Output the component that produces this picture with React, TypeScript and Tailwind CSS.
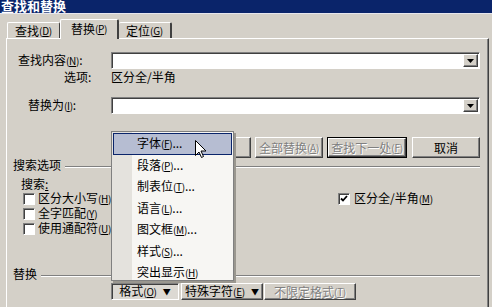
import React from "react";

const raised =
  "border border-t-white border-l-white border-b-[#404040] border-r-[#404040] shadow-[inset_-1px_-1px_0_#808080]";
const sunken =
  "border border-t-[#808080] border-l-[#808080] border-b-white border-r-white shadow-[inset_1px_1px_0_#404040]";
const disabledText = "text-[#808080] [text-shadow:1px_1px_0_#ffffff]";

function Acc({ c }: { c: string }) {
  return (
    <span className="text-[10px] tracking-[-0.3px]">
      (<u>{c}</u>)
    </span>
  );
}

function ComboBox() {
  return (
    <div className={`flex-1 h-[17px] bg-white flex items-center justify-end pr-[1px] ${sunken}`}>
      <div className={`w-[15px] h-[13px] bg-[#d4d0c8] flex items-center justify-center ${raised}`}>
        <svg width="7" height="4" viewBox="0 0 7 4">
          <path d="M0 0h7L3.5 4z" fill="#000" />
        </svg>
      </div>
    </div>
  );
}

function CheckBox({ checked }: { checked?: boolean }) {
  return (
    <div className={`w-[12px] h-[12px] shrink-0 bg-white flex items-center justify-center ${sunken}`}>
      {checked && (
        <svg width="8" height="8" viewBox="0 0 8 8">
          <path d="M1 3.5l2 2 4-4.5" stroke="#000" strokeWidth="1.8" fill="none" />
        </svg>
      )}
    </div>
  );
}

function MenuItem({ label, acc, dots, active }: { label: string; acc: string; dots?: boolean; active?: boolean }) {
  return (
    <div
      className={`h-[21.5px] flex items-center ${
        active ? "bg-[#b6bdd2] border border-[#0a246a] pl-[23px]" : "border border-transparent pl-[23px]"
      }`}
    >
      <span>
        {label}
        <Acc c={acc} />
        {dots ? "..." : ""}
      </span>
    </div>
  );
}

export default function App() {
  return (
    <div
      className="relative w-[492px] h-[307px] overflow-hidden bg-[#d4d0c8] text-[12px] leading-[14px] text-black"
      style={{ fontFamily: '"Noto Sans CJK SC", "Noto Sans", sans-serif' }}
    >
      {/* title bar */}
      <div className="h-[13px] bg-[#0a246a] text-white font-bold text-[13px] leading-[12px] pl-[1px] overflow-hidden">
        查找和替换
      </div>
      <div className="h-[1px] bg-[#e6e6ee]" />

      {/* tabs */}
      <div className="mt-[5px] h-[19px] pl-[7px] flex items-end">
        <div className="w-[53px] h-[16px] border-t border-l border-t-white border-l-white border-r border-r-[#404040] rounded-t-[2px] flex items-center justify-center">
          查找<Acc c="D" />
        </div>
        <div className="w-[59px] h-[20px] -mb-[1px] bg-[#d4d0c8] border-t border-l border-t-white border-l-white border-r-2 border-r-[#404040] rounded-t-[2px] flex items-center justify-center relative z-10 pb-[2px]">
          替换<Acc c="P" />
        </div>
        <div className="w-[53px] h-[16px] border-t border-t-white border-r-2 border-r-[#404040] rounded-t-[2px] flex items-center justify-center">
          定位<Acc c="G" />
        </div>
      </div>

      {/* panel */}
      <div className="ml-[6px] mr-[3px] h-[300px] border-t border-l border-t-white border-l-white border-r border-r-[#404040] shadow-[inset_-1px_0_0_#808080] pl-[1px] pr-[8px] flex flex-col">
        {/* Find row */}
        <div className="mt-[13px] flex items-center h-[17px]">
          <div className="w-[103px] pl-[10px]">
            查找内容<Acc c="N" />:
          </div>
          <ComboBox />
        </div>
        <div className="mt-[1px] h-[14px] flex items-center">
          <div className="w-[103px] pl-[56px]">选项:</div>
          <div>区分全/半角</div>
        </div>
        {/* Replace row */}
        <div className="mt-[13px] flex items-center h-[17px]">
          <div className="w-[103px] pl-[20px]">
            替换为<Acc c="I" />:
          </div>
          <ComboBox />
        </div>

        {/* buttons row */}
        <div className="mt-[23px] h-[21px] flex justify-end gap-[4px]">
          <div className={`w-[68px] h-[21px] flex items-center justify-center ${raised}`}>
            替换<Acc c="R" />
          </div>
          <div className={`w-[68px] h-[21px] flex items-center justify-center ${raised} ${disabledText}`}>
            全部替换<Acc c="A" />
          </div>
          <div className="w-[80px] h-[21px] border border-black">
            <div className={`w-full h-full flex items-center justify-center ${raised} ${disabledText}`}>
              查找下一处<Acc c="F" />
            </div>
          </div>
          <div className={`ml-[1px] w-[68px] h-[21px] flex items-center justify-center ${raised}`}>取消</div>
        </div>

        {/* search options group */}
        <div className="h-[14px] flex items-center pl-[5px]">
          <span>搜索选项</span>
          <div className="flex-1 ml-[4px] mt-[3px] h-[2px] border-t border-t-[#808080] border-b border-b-white" />
        </div>
        <div className="mt-[5px] h-[14px] flex items-center pl-[13px]">
          搜索<u>:</u>
        </div>
        <div className="h-[15px] flex items-center pl-[15px]">
          <div className="w-[315px] flex items-center gap-[3px]">
            <CheckBox />
            <span>
              区分大小写<Acc c="H" />
            </span>
          </div>
          <div className="flex items-center gap-[4px]">
            <CheckBox checked />
            <span>
              区分全/半角<Acc c="M" />
            </span>
          </div>
        </div>
        <div className="h-[15px] flex items-center pl-[15px] gap-[3px]">
          <CheckBox />
          <span>
            全字匹配<Acc c="Y" />
          </span>
        </div>
        <div className="h-[15px] flex items-center pl-[15px] gap-[3px]">
          <CheckBox />
          <span>
            使用通配符<Acc c="U" />
          </span>
        </div>

        {/* replace group */}
        <div className="mt-[31px] h-[14px] flex items-center pl-[5px]">
          <span>替换</span>
          <div className="flex-1 ml-[4px] mt-[3px] h-[2px] border-t border-t-[#808080] border-b border-b-white" />
        </div>
        <div className="mt-[2px] h-[17px] flex pl-[103px]">
          <div className={`w-[68px] h-[17px] flex items-center justify-center gap-[6px] ${sunken} bg-[#dcd9d3]`}>
            <span>
              格式<Acc c="O" />
            </span>
            <span className="text-[8px]">▼</span>
          </div>
          <div className={`ml-[2px] w-[82px] h-[17px] flex items-center justify-center gap-[6px] ${raised}`}>
            <span>
              特殊字符<Acc c="E" />
            </span>
            <span className="text-[8px]">▼</span>
          </div>
          <div className={`ml-[1px] w-[92px] h-[17px] flex items-center justify-center ${raised} ${disabledText}`}>
            不限定格式<Acc c="T" />
          </div>
        </div>
      </div>

      {/* dropdown menu */}
      <div className="absolute left-[111px] top-[131px] w-[123px] h-[150px] border border-[#808080] bg-[#f7f6f3] shadow-[2px_2px_0_#9a978f] p-[1px]">
        <div className="absolute left-0 top-0 w-[20px] h-full bg-[#e4e2dd]" />
        <div className="relative">
          <MenuItem label="字体" acc="F" dots active />
          <MenuItem label="段落" acc="P" dots />
          <MenuItem label="制表位" acc="T" dots />
          <MenuItem label="语言" acc="L" dots />
          <MenuItem label="图文框" acc="M" dots />
          <MenuItem label="样式" acc="S" dots />
          <MenuItem label="突出显示" acc="H" />
        </div>
      </div>

      {/* mouse cursor */}
      <svg className="absolute left-[195px] top-[140px]" width="12" height="19" viewBox="0 0 12 19">
        <path
          d="M0.5 0.5 L0.5 15.5 L4 12 L6.5 17.5 L8.5 16.5 L6 11 L11 11 Z"
          fill="#fff"
          stroke="#000"
          strokeWidth="1"
          strokeLinejoin="miter"
        />
      </svg>
    </div>
  );
}
